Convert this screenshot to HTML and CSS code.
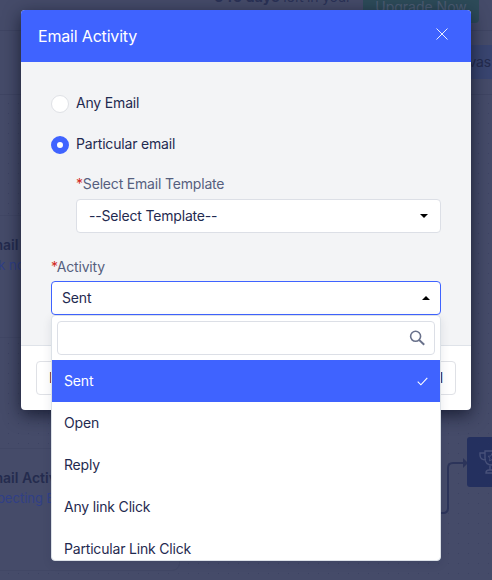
FILE: index.html
```html
<!DOCTYPE html>
<html lang="en">
<head>
<meta charset="utf-8">
<title>Email Activity</title>
<link rel="stylesheet" href="styles.css">
</head>
<body>
<div class="page">
  <div class="topbar">
    <div class="trial"><b>345 days</b> left in your</div>
    <div class="upgrade">Upgrade Now</div>
  </div>
  <div class="toolbar"><div class="tab">Canvas</div></div>
  <div class="canvas">
    <div class="node node-a"><b>Email Activity</b><span>Click node to</span></div>
    <div class="node node-b"><b>Email Activity</b><span>Expecting Email</span></div>
    <svg class="link" width="34" height="60" viewBox="0 0 34 60"><path d="M0 54h3q5 0 5-5V9q0-5 5-5h11" fill="none" stroke="#2c345a" stroke-width="2"/><path d="M23 -1l5 5-5 5z" fill="#2c345a"/></svg>
    <div class="goal"><svg width="26" height="26" viewBox="0 0 26 26" fill="none" stroke="#475079" stroke-width="1.4"><path d="M6 2h14v7q0 7-7 7T6 9zM6 4H1v2q0 5 6 5M20 4h5v2q0 5-6 5M11 16v5M15 16v5M7 24q0-3 3-3h6q3 0 3 3z"/><path d="M13 4.500l1.200 2.500 2.800.3-2 1.900.5 2.700-2.500-1.300-2.500 1.300.5-2.700-2-1.900 2.800-.3z" stroke-width="1"/></svg></div>
  </div>
</div>
<section class="modal">
  <header class="modal-head">
    <h1>Email Activity</h1>
    <svg width="12" height="12" viewBox="0 0 12 12"><path d="M.5.500l11 11M11.500.500l-11 11" stroke="#fff" stroke-width=".9"/></svg>
  </header>
  <div class="modal-body">
    <div class="radio"><i class="dot"></i>Any Email</div>
    <div class="radio second"><i class="dot on"></i>Particular email</div>
    <div class="field inner">
      <label><em>*</em>Select Email Template</label>
      <div class="select template"><span>--Select Template--</span><i class="caret"></i></div>
    </div>
    <div class="field activity">
      <label><em>*</em>Activity</label>
      <div class="select open"><span>Sent</span><i class="caret up"></i>
        <div class="menu">
          <div class="search"><svg width="16" height="16" viewBox="0 0 16 16" fill="none" stroke="#69718b"><circle cx="6.600" cy="6.300" r="5" stroke-width="1.600"/><path d="M10.200 10l5 4.700" stroke-width="1.900"/></svg></div>
          <div class="option picked">Sent<svg width="11" height="9" viewBox="0 0 11 9"><path d="M.7 4.600l3.200 3.200L10.300.9" fill="none" stroke="#fff" stroke-width="1.100"/></svg></div>
          <div class="option">Open</div>
          <div class="option">Reply</div>
          <div class="option">Any link Click</div>
          <div class="option">Particular Link Click</div>
        </div>
      </div>
    </div>
  </div>
  <footer class="modal-foot"><div class="btn">Delete</div><div class="btn">Cancel</div></footer>
</section>
</body>
</html>
```
FILE: styles.css
```css
* { box-sizing: border-box; }
html { overflow: hidden; }
body {
  margin: 0;
  width: 492px;
  height: 580px;
  overflow: hidden;
  position: relative;
  font: 14px/20px Inter, "Liberation Sans", sans-serif;
  letter-spacing: -.18px;
  color: #1f2a50;
  background: #454b69;
}
.page { height: 580px; display: flex; flex-direction: column; color: #242b4e; }
.topbar {
  height: 31px;
  border-bottom: 1px solid #3f4563;
  display: flex;
  justify-content: flex-end;
  padding-right: 13px;
  gap: 12px;
}
.trial { margin-top: -13px; white-space: nowrap; color: #2a3156; }
.trial b { font-weight: 700; letter-spacing: .2px; }
.upgrade {
  width: 116px;
  height: 35px;
  margin-top: -12px;
  padding-top: 9px;
  border-radius: 4px;
  text-align: center;
  font-size: 14px;
  letter-spacing: 0;
  color: #4d5d74;
  background: #2d4b59;
}
.toolbar {
  height: 64px;
  border-bottom: 1px solid #3f4563;
  display: flex;
  justify-content: flex-end;
  padding-top: 14px;
}
.tab {
  width: 64px;
  height: 34px;
  padding: 7px 1px 0 0;
  text-align: right;
  background: #394570;
}
.canvas {
  flex: 1;
  position: relative;
  overflow: hidden;
  background-image: radial-gradient(circle at 5.5px 5.5px, #3c4262 0 .7px, transparent .8px);
  background-size: 10px 10px;
  background-position: 3px 3px;
}
.node {
  position: absolute;
  left: -60px;
  width: 240px;
  height: 123px;
  border-radius: 8px;
  border: 1px solid #414765;
  background: #454b69;
  display: flex;
  flex-direction: column;
  padding: 19px 0 0 41px;
  white-space: nowrap;
}
.node b { font-weight: 600; line-height: 20px; letter-spacing: 0; }
.node span { font-size: 13px; line-height: 20px; letter-spacing: 0; color: #303f86; }
.node-a { top: 120px; }
.node-b { top: 353px; }
.node-a span { margin-left: -7px; }
.link { position: absolute; left: 440px; top: 364px; overflow: visible; }
.goal {
  position: absolute;
  left: 467px;
  top: 342px;
  width: 50px;
  height: 50px;
  border-radius: 3px;
  background: #24305f;
  padding: 12px;
}
.modal {
  position: absolute;
  left: 21px;
  top: 10px;
  width: 450px;
  height: 400px;
  border-radius: 4px;
  background: #fff;
  box-shadow: 0 5px 17px rgba(10, 14, 32, .72);
}
.modal-head {
  height: 52px;
  padding: 0 23px 0 17px;
  display: flex;
  align-items: center;
  justify-content: space-between;
  border-radius: 4px 4px 0 0;
  background: #3f63ff;
  color: #fff;
}
.modal-head h1 { margin: 0; font-size: 16px; font-weight: 400; }
.modal-head svg { margin-bottom: 4px; }
.modal-body {
  height: 284px;
  padding: 31px 30px 0;
  border-bottom: 1px solid #dfe3e9;
  background: #f3f4f6;
}
.radio { display: flex; align-items: center; gap: 7px; height: 20px; }
.second { margin-top: 21px; }
.dot {
  width: 18px;
  height: 18px;
  margin-top: 2px;
  border: 1px solid #dfe1e6;
  border-radius: 50%;
  background: #fff;
}
.dot.on { border: 6px solid #3f63ff; }
.field label { display: block; color: #565f7e; line-height: 20px; }
.field em { font-style: normal; color: #d22a22; }
.inner { margin: 20px 0 0 25px; }
.activity { margin-top: 24px; }
.select {
  height: 34px;
  margin-top: 5px;
  padding: 0 12px;
  display: flex;
  align-items: center;
  justify-content: space-between;
  border: 1px solid #dcdfe6;
  border-radius: 4px;
  background: #fff;
}
.open { position: relative; margin-top: 4px; padding: 0 10px; border-color: #3f63ff; }
.caret {
  border: 4px solid transparent;
  border-top-color: #000;
  border-bottom: 0;
}
.caret.up { border-top: 0; border-bottom: 4px solid #000; }
.menu {
  position: absolute;
  left: -1px;
  top: 33px;
  width: 390px;
  height: 246px;
  padding-top: 5px;
  overflow: hidden;
  border: 1px solid #dce1e7;
  border-radius: 4px;
  background: #fff;
  box-shadow: 0 3px 10px rgba(20, 28, 58, .1);
}
.search {
  height: 34px;
  margin: 0 5px 5px;
  padding-right: 9px;
  display: flex;
  align-items: center;
  justify-content: flex-end;
  border: 1px solid #dcdfe6;
  border-radius: 4px;
}
.option {
  height: 42px;
  padding: 0 12px;
  display: flex;
  align-items: center;
  justify-content: space-between;
}
.picked { background: #3f63ff; color: #fff; }
.modal-foot { display: flex; justify-content: space-between; padding: 15px; }
.btn {
  height: 34px;
  padding: 6px 12px;
  border: 1px solid #dfe1e6;
  border-radius: 4px;
}
```
